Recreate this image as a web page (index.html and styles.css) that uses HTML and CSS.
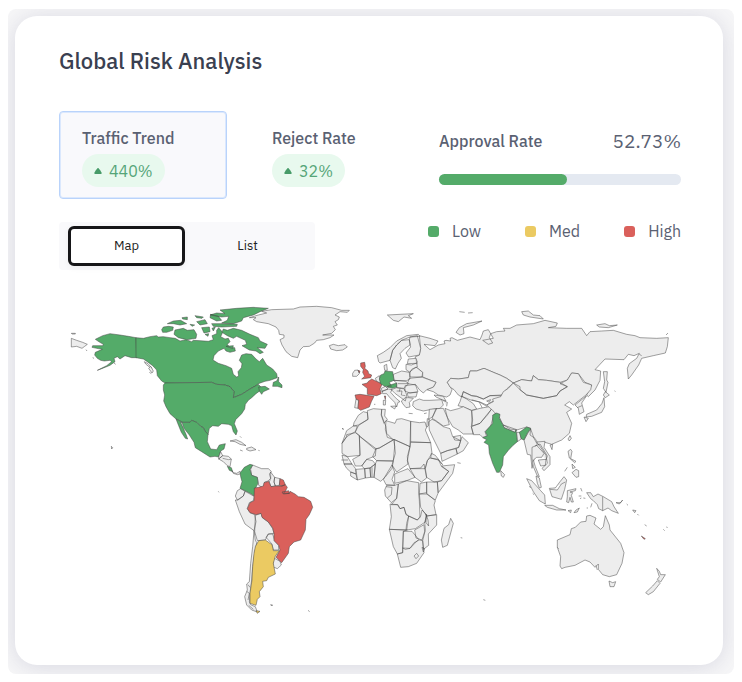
FILE: index.html
```html
<!DOCTYPE html>
<html lang="en">
<head>
<meta charset="utf-8">
<meta name="viewport" content="width=device-width, initial-scale=1">
<title>Global Risk Analysis</title>
<link rel="stylesheet" href="styles.css">
</head>
<body>
<main class="frame">
<section class="card">
  <h1 class="title">Global Risk Analysis</h1>
  <div class="metrics">
    <div class="metric metric-active">
      <span class="label">Traffic Trend</span>
      <span class="pill"><svg class="arrow" viewBox="0 0 8 8" aria-hidden="true"><path d="M4 1Q5 1 7.5 5.5Q8 7 7 7H1Q0 7 .5 5.5Q3 1 4 1Z"/></svg>440%</span>
    </div>
    <div class="metric">
      <span class="label">Reject Rate</span>
      <span class="pill"><svg class="arrow" viewBox="0 0 8 8" aria-hidden="true"><path d="M4 1Q5 1 7.5 5.5Q8 7 7 7H1Q0 7 .5 5.5Q3 1 4 1Z"/></svg>32%</span>
    </div>
    <div class="approval">
      <div class="approval-head"><span class="label">Approval Rate</span><span class="value">52.73%</span></div>
      <div class="track"><div class="fill" style="width:52.73%"></div></div>
    </div>
  </div>
  <div class="controls">
    <div class="tabs">
      <button class="tab tab-active" type="button">Map</button>
      <button class="tab" type="button">List</button>
    </div>
    <ul class="legend">
      <li><i class="dot low"></i>Low</li>
      <li><i class="dot med"></i>Med</li>
      <li><i class="dot high"></i>High</li>
    </ul>
  </div>
  <svg class="map" viewBox="177 885 1866 975" aria-hidden="true">
    <!-- Alaska and Chukotka -->
    <g transform="translate(180 885)">
      <path class="g" d="M228 128L205 124 180 120 150 116 128 122 106 133 118 141 130 148 128 152 98 152 96 157 110 160 127 163 106 172 104 180 112 190 122 196 133 198 150 196 155 200 140 212 112 226 125 221 150 211 165 200 162 190 172 185 180 192 195 182 215 188 230 188Z"/>
      <path d="M34 130L50 136 68 142 82 148 74 154 66 160 50 154 34 156ZM34 115L46 115 46 117 36 117ZM154 454L158 458 155 462ZM78 164L81 168M162 204L167 208M98 188L102 190M268 232L274 236M253 200L264 206 276 220 268 216 257 207Z"/>
    </g>
    <!-- North America and Greenland -->
    <g transform="translate(450 885)">
      <path class="g" d="M-42 128L-20 130 0 125 20 122 25 126 40 125 60 128 76 130 90 138 108 134 125 140 130 136 150 137 175 139 190 134 186 122 200 116 200 106 206 98 218 112 212 125 225 132 235 130 240 140 232 148 240 158 254 158 256 168 240 172 228 168 222 160 205 168 192 182 189 195 205 205 228 212 245 220 250 238 260 246 266 243 264 230 274 218 276 206 268 196 275 180 288 176 305 178 318 192 328 200 338 190 350 210 368 222 380 236 382 248 360 256 345 259 325 266 318 272 300 282 275 298 250 308 252 290 240 275 225 270 200 268 185 262 45 264 35 258 22 242 20 225 8 212-8 200-20 192-42 188Z"/>
      <path class="g" d="M45 264L185 262 200 268 225 270 240 275 252 290 250 308 275 298 300 282 318 272 325 268 332 275 334 284 318 296 305 308 295 316 286 328 284 342 275 356 257 374 253 386 262 408 258 420 250 410 245 392 235 388 215 386 205 394 188 392 178 400 174 420 165 408 160 398 152 394 140 382 125 376 120 382 98 382 78 372 60 356 48 335 41 318 44 300 40 285 40 270Z"/>
      <path class="g" d="M78 372L98 382 120 382 125 376 140 382 152 394 160 398 165 408 174 418 172 440 182 462 200 464 208 450 226 446 222 462 212 468 206 486 195 484 180 486 155 470 136 458 132 442 118 420 102 400 96 382 92 382 100 400 108 418 113 432 106 430 94 412 86 392Z"/>
      <path class="g" d="M326 276L345 274 358 282 340 290 335 298 328 288ZM370 262L380 258 386 246 386 260 396 270 396 278 382 274 368 274Z"/>
      <path class="g" d="M232 106L250 100 275 106 300 118 325 128 330 138 352 148 345 160 322 158 340 172 330 176 318 168 298 165 276 152 290 148 286 136 260 124 250 130 232 122 216 112 220 102ZM210 45L260 40 310 37 355 40 330 50 310 60 280 68 275 78 250 86 215 84 232 76 236 64 215 66 180 60 200 54 225 56ZM75 105L100 100 112 106 132 104 140 118 138 130 110 134 85 128 72 118ZM35 104L40 96 56 94 70 96 68 106 50 112 38 112ZM52 86L70 78 92 76 110 86 90 90 70 86ZM140 80L165 74 172 86 150 90ZM155 98L178 96 180 110 162 114ZM185 86L220 86 262 88 260 94 215 96 190 94ZM135 62L160 66 156 70 140 68ZM96 68L112 66 112 74 98 72ZM182 58L205 64 215 76 200 78 180 68ZM228 154L250 152 248 160ZM120 88L134 90 126 94ZM186 100L196 96 190 108ZM165 118L176 116 174 124Z"/>
      <path class="g" d="M232 514L244 518 248 530 238 526Z"/>
      <path d="M298 68L325 60 350 54 335 49 365 44 430 42 450 36 500 34 545 38 575 46 598 46 592 52 570 50 555 60 568 66 565 74 555 80 562 90 550 94 556 104 545 115 518 120 552 120 540 128 520 134 500 136 494 144 478 154 460 155 450 165 443 188 425 184 408 170 396 150 390 134 402 128 402 120 388 118 386 106 378 96 355 86 320 80 310 74 318 68ZM538 152L550 148 565 152 585 149 592 156 578 165 560 167 542 162ZM240 438L258 434 275 442 288 452 270 448 255 440ZM290 460L305 456 318 464 300 468 290 464ZM270 465L278 468M325 466L329 467M270 424L274 428M576 400L580 402M2 214L-4 220 6 234 10 228ZM206 486L212 470 218 482 206 492ZM218 482L235 484 244 492 240 515 232 512 220 500 206 492ZM218 490L236 494 244 492"/>
    </g>
    <!-- South America -->
    <g transform="translate(600 1350)">
      <path d="M96 62L100 68 110 70 120 64 124 70 120 72 112 74 100 70ZM158 45L152 58 155 76 172 82 176 106 190 114 194 96 204 93 212 85 208 72 214 64 205 56 185 56 170 50ZM212 66L224 82 222 96 226 108 213 110 208 96 212 85ZM224 82L240 86 238 106 226 108 222 96ZM112 122L122 116 135 124 130 138 112 150 106 138ZM106 150L114 150 130 138 135 124 150 132 163 140 160 152 148 158 142 176 150 188 164 194 168 215 162 242 135 222 118 185ZM166 196L183 190 188 204 205 216 218 236 222 250 205 252 196 270 172 272 164 245ZM198 262L205 252 218 252 224 272 236 286 236 300 220 300 216 282ZM222 324L240 334 244 345 232 356 218 350ZM162 242L166 270 170 278 164 310 158 350 155 390 150 430 148 456 152 464 166 470 172 486 155 480 140 465 134 440 142 420 140 402 148 395 152 340 158 290ZM140 424L148 430 144 450M144 404L150 412M146 466L160 478M55 124L57 127M212 464L218 465 215 468ZM324 481L329 485"/>
      <path class="g" d="M120 68L124 64 133 52 150 43 158 45 150 58 155 76 172 82 174 100 168 112 163 138 150 130 135 122 120 115 126 95 122 80Z"/>
      <path class="r" d="M163 114L176 112 190 108 192 98 206 94 213 110 228 108 246 108 256 104 262 112 256 124 250 130 268 130 270 124 285 132 295 140 312 142 332 154 338 172 328 194 318 208 316 240 302 270 282 276 268 290 265 310 245 338 228 322 240 300 236 286 222 272 222 250 218 234 205 216 186 202 183 190 168 194 150 188 142 176 150 158 162 152ZM240 86L250 90 256 104 246 108 238 106ZM246 126L266 122 268 130 250 132Z"/>
      <path class="y" d="M176 272L196 270 216 284 220 302 238 302 226 318 220 340 226 372 205 382 200 392 188 394 190 410 178 425 180 440 172 448 168 466 150 460 150 430 156 390 158 350 162 310 166 290ZM168 482L180 484 172 490Z"/>
    </g>
    <!-- Europe -->
    <g transform="translate(990 885)">
      <path d="M268 122L300 130 324 138 315 152 282 148 300 164 325 150 345 146 342 138 348 136 362 138 360 130 366 128 382 136 420 126 450 134 456 120 460 108 475 104 482 116 478 128 488 144 475 148 458 136 490 130 482 116 500 110 525 108 520 100 540 100 560 90 610 86 645 76 682 84 678 94 655 98 710 100 755 100 770 122 780 110 815 108 850 106 890 118 915 122 930 128 980 130 1015 128 1012 155 1006 174 970 182 935 190 926 210 905 240 895 252 892 220 898 206 920 190 928 175 912 182 895 178 882 194 825 192 795 224 812 228 810 256 795 285 775 305 770 300 785 270 765 262 745 236 725 234 712 255 690 262 650 256 625 254 610 242 605 258 575 254 550 264 530 250 510 240 495 234 462 220 440 228 420 228 415 248 385 252 362 250 352 262 360 274 366 284 360 300 350 306 325 300 310 290 290 284 310 276 318 262 278 246 278 232 258 216 262 200 255 186 268 180 272 160Z"/>
      <path d="M352 262L362 250 385 252 415 248 420 228 440 228 462 220 495 234 510 240 530 250 550 264 530 282 515 300 480 302 460 312 440 304 425 302 400 290 395 306 385 300 372 284 360 276ZM395 306L400 290 425 302 440 304 460 312 480 302 515 302 510 316 486 320 470 330 448 320 425 316 395 304M395 304L390 320 384 332 400 336 425 346 440 342 430 326 410 312ZM425 314L450 322 470 334 480 328 510 318M470 318L482 314 478 322ZM448 322L460 345"/>
      <path d="M146 200L142 182 160 172 180 158 200 138 230 122 265 118 270 124 240 126 215 136 200 150 188 166 180 196 165 200 150 204ZM180 196L188 166 200 150 215 136 238 134 240 150 225 160 210 176 214 190 204 205 196 222 188 218ZM238 134L240 126 262 122 272 160 268 180 236 186 228 174 242 156ZM190 238L215 228 238 232 240 252 228 258 192 256ZM235 192L258 190 260 205 232 206ZM228 208L244 210 260 204 262 216 246 222 240 232 228 224ZM240 230L258 216 278 232 276 246 240 246ZM238 250L275 246 318 262 310 276 290 284 280 294 268 284 258 270 232 266ZM225 272L256 268 264 290 240 294 224 288ZM232 294L262 292 258 306 234 306ZM190 256L226 258 236 266 222 280 200 278 200 264ZM204 266L232 266M184 284L200 278 224 282 230 300 226 318 210 306 196 296ZM200 288L216 288 214 300 226 302M210 280L208 290M214 318L226 308 236 308 250 310 238 322 240 336 228 338 218 326ZM250 320L268 312 280 316 300 316 335 314 340 330 330 340 300 344 280 348 258 342 248 332ZM136 250L148 242 152 264 140 260ZM154 280L166 274 174 282 156 290ZM162 212L170 208 172 226 164 226ZM156 288L175 282 186 284 182 292 196 308 210 320 204 322 200 336 194 322 178 306 170 296 158 296ZM182 334L198 333 194 342ZM160 316L167 316 166 330 160 330ZM68 235L74 226 84 225 88 236 80 244 68 244ZM78 312L86 316 84 340 74 338ZM172 60L210 58 250 56 235 62 245 70 222 66 205 80 190 76ZM388 50L404 52M414 54L428 53M378 112L388 98 410 86 456 78 430 90 400 98 402 116 390 120ZM236 355L248 356M282 356L290 354M575 50L595 48 610 60 630 62 640 72 600 66 580 60ZM800 90L825 86 838 92 862 90 835 98 808 96ZM312 300L340 304 348 318 336 314 318 306ZM338 316L352 322 350 334M132 328L136 328M1008 120L1014 114"/>
      <path class="r" d="M92 204L104 202 106 214 104 220 114 228 116 236 125 240 122 248 95 252 104 244 98 232 100 224 92 214ZM96 268L112 264 114 260 125 252 142 260 156 268 150 282 154 296 140 302 112 298 112 280ZM75 300L90 298 132 304 124 320 118 336 92 346 84 340 86 316 78 312ZM163 303L167 303 166 314ZM84 226L90 228 88 234Z"/>
      <path class="g" d="M152 240L162 236 165 228 188 230 192 256 178 262 184 274 164 274 152 266 148 252ZM180 270L200 264 200 276 186 280 170 276Z"/>
    </g>
    <!-- Africa and the Middle East -->
    <g transform="translate(990 1170)">
      <path d="M345 55L362 62 385 56 400 50 425 62 428 90 424 110 430 132 400 132 385 120 368 110 352 82ZM425 62L450 55 488 48 486 56 470 75 450 100 426 108ZM430 134L424 110 450 100 472 75 486 55 500 62 490 80 482 108 465 125 470 140 458 142 450 134ZM318 56L340 55 352 82 358 104 340 108 318 92 306 85ZM298 58L320 56 308 80 296 88ZM296 95L306 88 315 92 340 110 360 116 368 140 392 152 386 172 352 182 332 190 312 150 298 120ZM332 190L352 182 378 176 382 192 336 214ZM392 152L396 140 415 158 400 182 382 192 378 176 386 172ZM370 140L392 136 392 152 374 150ZM292 86L298 88 296 106 290 112Z"/>
      <path d="M70 108L72 98 85 76 100 65 112 68 114 88 85 105ZM70 108L82 108 76 125 50 140 36 160 50 122ZM112 62L130 56 155 58 154 74 160 90 168 110 170 130 190 150 148 174 135 178 88 138 76 126 86 106 114 88ZM155 58L166 58 164 78 172 88 162 100 154 76ZM168 92L195 100 200 88 215 86 242 94 240 170 195 150 172 142 166 118ZM242 94L268 98 285 96 290 112 286 120 302 158 242 156ZM36 160L50 140 50 134 76 128 88 136 90 196 52 200 36 190ZM88 138L138 176 136 198 110 208 95 228 76 228 68 208 90 196ZM138 176L148 174 192 148 194 170 190 212 140 212 128 200ZM192 148L240 170 232 200 234 222 200 246 186 225 196 190ZM242 156L302 158 306 190 292 212 285 236 240 236 232 212 240 170ZM36 195L52 200 66 222 42 222ZM34 210L54 210M42 222L66 222 76 235 78 252 62 246 50 235ZM62 246L78 252 82 270 62 258ZM78 238L104 236 106 264 82 270ZM104 236L120 234 122 262 106 264ZM95 228L110 208 128 212 136 222 120 234 104 236ZM120 234L136 222 132 262 122 262ZM126 232L126 262M136 222L140 212 190 214 186 235 165 262 152 274 132 262ZM186 225L194 246 186 268 194 286 168 284 160 268ZM194 252L234 236 255 262 230 272 194 280ZM240 236L272 234 282 222 290 264 274 276 255 262ZM292 212L300 204 325 208 335 230 356 244 335 272 312 276 290 262 286 236ZM335 228L374 224 368 250 325 308 322 276 335 272 356 244ZM304 190L316 196 338 224 325 210 302 204ZM290 276L322 276 324 310 316 330 290 312ZM270 280L290 276 290 308 268 312ZM268 312L292 312 316 332 312 345 318 374 290 378 272 352ZM205 282L230 272 266 278 266 310 268 330 270 382 262 390 236 378 228 372 222 352 210 356 204 344 184 344 200 325ZM164 300L170 286 194 286 205 282 200 325 184 338 166 318ZM168 290L186 292 184 314 172 324M180 342L202 344 210 356 222 352 228 374 236 378 230 400 228 420 178 418 184 380ZM236 378L262 390 272 378 276 360 290 374 286 396 256 416 230 420ZM290 378L320 374 320 405 295 432 296 466 280 478 278 452 286 420 284 396ZM288 372L294 390 296 408 288 398ZM254 420L282 404 284 425 276 450 258 444ZM178 418L232 420 220 424 218 488 202 492 190 470ZM220 424L246 424 266 448 240 475 218 474ZM202 492L218 488 218 474 226 478 240 475 252 458 268 450 278 452 282 488 260 520 235 530 212 532ZM252 498L260 490 266 498 258 506ZM276 472L284 476 280 486ZM362 385L370 400 352 466 338 472 334 450 342 415 356 404ZM382 218L392 220M392 443L397 444M36 116L42 118"/>
    </g>
    <!-- Asia -->
    <g transform="translate(1440 885)">
      <path d="M100 264L120 275 120 284 140 300 190 310 230 302 240 288 262 275 240 266 262 255 275 234 295 236 310 262 335 270 332 284 318 300 295 318 280 330 268 320 254 330 275 342 260 352 275 385 268 415 245 435 215 448 195 442 175 448 165 430 150 420 152 400 140 396 110 405 90 402 68 388 60 370 42 350 20 330 40 320 38 312 62 305 70 290 85 280ZM100 264L125 254 155 258 160 242 175 254 200 256 240 262 262 275 240 288 230 302 190 310 140 300 120 284ZM285 330L300 318 320 302 305 324 312 350 298 358 295 340ZM292 338L306 332M372 308L374 335 365 352 335 364 318 366 320 358 350 345 366 325ZM370 300L376 290 388 300 376 308ZM312 366L325 370 318 380ZM370 230L382 230 380 255 384 262 378 292 370 280 374 260ZM404 287L406 290M264 432L270 422 274 430 268 438ZM210 450L218 448 216 464ZM70 390L110 404 105 412 72 398ZM110 412L120 412 124 432 112 440ZM132 435L145 412 152 402 162 430 172 448 160 458 165 480 156 520 152 480 142 478ZM478 178L485 182"/>
      <path class="g" d="M38 360L50 354 60 358 58 370 68 388 72 398 105 412 108 404 112 440 98 452 85 466 70 485 68 510 58 532 50 532 38 505 28 475 26 450 12 442 20 434 8 428 22 422 16 410 38 385ZM118 412L140 396 152 400 142 415 132 435 124 432Z"/>
    </g>
    <!-- South-East Asia and Oceania -->
    <g transform="translate(1410 1290)">
      <path d="M186 52L200 46 222 70 215 82 200 82 190 90 196 110 208 140 202 138 190 110 186 85ZM200 36L225 34 222 52 240 80 240 104 222 122 216 115 232 100 228 76 212 52ZM205 90L228 88 226 106 212 108ZM196 48L210 42 232 78 228 90M198 138L208 144 214 172 208 174 202 160ZM170 146L185 152 212 182 224 195 226 222 208 212 190 185ZM224 226L248 226 268 236 288 240 260 240 232 232ZM238 175L256 174 270 155 282 140 290 150 284 178 274 208 246 200ZM240 178L262 180 274 162 286 156M292 182L318 176 316 182 300 186 308 188 304 196 310 216 304 216 300 202 296 218 290 216 292 200ZM294 64L302 58 306 64 302 86 318 94 314 98 298 84ZM306 128L318 118 326 122 326 140 318 142ZM306 102L316 112 308 116ZM284 124L292 112M294 242L304 240 302 248ZM312 248L318 240 328 234 322 246ZM332 174L336 184M326 198L334 198M340 204L346 205M334 204L330 206M350 188L362 188 370 200 384 192 400 200 425 215 432 230 445 250 425 242 414 234 398 242 386 236 382 224 370 212 362 206ZM398 200L398 242M438 218L452 218 458 210 448 222ZM470 222L474 226M488 240L498 242 494 248ZM502 252L506 256M524 284L530 288M584 302L580 298M590 290L592 294M362 232L366 220M350 234L354 234M178 168L182 174M188 190L192 194M92 122L104 134 100 142 94 138ZM40 509L46 511"/>
      <path d="M262 330L300 314 304 296 316 292 332 276 348 274 350 258 360 256 378 264 372 282 392 298 400 290 406 257 418 285 420 300 432 315 452 340 462 368 456 400 440 434 418 440 398 434 385 418 385 402 375 412 360 396 345 390 315 406 285 412 275 416 270 408 272 380 262 352ZM417 453L428 458 437 455 432 470 420 470ZM560 415L568 424 572 434 586 434 572 456 562 448 568 440ZM562 452L570 460 550 485 535 494 527 488 548 468ZM262 352L266 356M378 406L382 420"/>
      <path class="r" d="M514 318L526 326 522 328Z"/>
    </g>
  </svg>
</section>
</main>
</body>
</html>
```
FILE: styles.css
```css
* { box-sizing: border-box; }
body {
  margin: 0;
  padding: 9px 8px;
  background: #fff;
  color: #5a6172;
  font-family: "IBM Plex Sans", Roboto, sans-serif;
  font-size: 16px;
  line-height: 20px;
}
.frame {
  padding: 7px 11px 9px 7px;
  border-radius: 8px;
  background: #f7f7f8;
  overflow: hidden;
}
.card {
  padding: 32px 42px 45px 44px;
  border-radius: 22px;
  background: #fff;
  box-shadow: 0 2px 24px rgba(70, 70, 120, .18);
}
.title {
  margin: 0;
  color: #3a4050;
  font-size: 22px;
  font-weight: 500;
  line-height: 26px;
}
.metrics {
  display: grid;
  grid-template-columns: 168fr 168fr 242fr;
  gap: 22px;
  margin-top: 37px;
}
.label { font-weight: 500; }
.metric {
  display: flex;
  flex-direction: column;
  align-items: flex-start;
  gap: 6px;
  padding: 16px 22px 11px;
  border: 1px solid transparent;
  border-radius: 4px;
}
.metric-active { border-color: #b9d3fb; background: #f9f9fc; box-shadow: 0 0 0 1px #dbe8fd inset; }
.pill {
  display: inline-flex;
  align-items: center;
  gap: 7px;
  height: 33px;
  padding: 0 12px;
  border-radius: 17px;
  background: #e8f9ee;
  color: #55a578;
  font-size: 16px;
}
.arrow { width: 8px; height: 8px; fill: #479b68; }
.approval { padding-top: 20px; }
.approval-head { display: flex; justify-content: space-between; align-items: center; }
.value { font-size: 19px; }
.track { height: 11px; margin-top: 23px; border-radius: 6px; background: #e4e9f1; }
.fill { height: 100%; border-radius: 6px; background: #54ab69; }
.controls {
  display: flex;
  justify-content: space-between;
  align-items: flex-start;
  margin-top: 23px;
}
.tabs {
  display: flex;
  gap: 4px;
  padding: 4px 9px;
  border-radius: 4px;
  background: #f9f9fb;
}
.tab {
  width: 117px;
  height: 40px;
  border: 3px solid transparent;
  border-radius: 6px;
  background: none;
  color: #222;
  font: 13px/16px "IBM Plex Sans", Roboto, sans-serif;
}
.tab-active { border-color: #161618; background: #fff; box-shadow: 0 2px 6px rgba(0, 0, 0, .05); }
.legend { display: flex; gap: 44px; margin: 0; padding: 0; line-height: 18px; list-style: none; }
.legend li { display: flex; align-items: center; gap: 13px; }
.dot { width: 11px; height: 11px; border-radius: 3px; }
.low { background: #54ab69; }
.med { background: #ebca62; }
.high { background: #da605b; }
.map {
  display: block;
  width: 100%;
  margin-top: 25px;
  fill: #ededed;
  stroke: rgba(70, 70, 70, .5);
  stroke-width: 3;
  stroke-linejoin: round;
}
.g { fill: #54ab69; }
.r { fill: #da605b; }
.y { fill: #ebca62; }
```
